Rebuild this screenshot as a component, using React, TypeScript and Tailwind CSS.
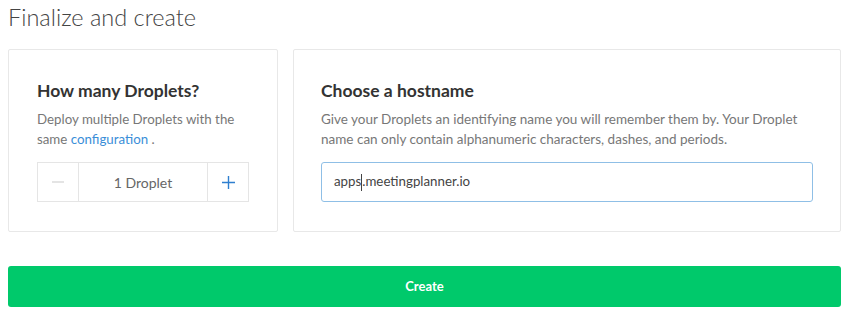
import React from "react";

export default function App() {
  return (
    <div className="w-[850px] h-[312px] bg-white overflow-hidden" style={{ fontFamily: "Lato, 'Open Sans', sans-serif" }}>
      <div className="px-2 pt-[2px]">
        <h1 className="text-[23.5px] leading-[31px] font-light text-[#444]">Finalize and create</h1>
        <div className="mt-[16px] flex gap-[15px]">
          <div className="w-[270px] h-[183px] border border-[#e8e8e8] rounded-[2px] pl-[28px] pr-[20px] pt-[30px]">
            <h2 className="text-[17.5px] leading-[22px] font-bold text-[#333]">How many Droplets?</h2>
            <p className="mt-[7px] text-[13.3px] leading-[20px] text-[#777]">
              Deploy multiple Droplets with the
              <br />
              same <span className="text-[#3a8ed8]">configuration</span> .
            </p>
            <div className="mt-[13px] flex h-[40px] border border-[#e5e5e5] w-[212px]">
              <div className="w-[41px] flex items-center justify-center border-r border-[#e5e5e5]">
                <svg width="12" height="12" viewBox="0 0 12 12"><path d="M0 6h12" stroke="#d2d2d2" strokeWidth="1.2" /></svg>
              </div>
              <div className="flex-1 flex items-center justify-center text-[14px] text-[#666]">1 Droplet</div>
              <div className="w-[41px] flex items-center justify-center border-l border-[#e5e5e5]">
                <svg width="13" height="13" viewBox="0 0 13 13"><path d="M0 6.5h13M6.5 0v13" stroke="#2f7fcf" strokeWidth="1.4" /></svg>
              </div>
            </div>
          </div>
          <div className="flex-1 mr-[1px] h-[183px] border border-[#e8e8e8] rounded-[2px] pl-[27px] pt-[30px]">
            <h2 className="text-[17.5px] leading-[22px] font-bold text-[#333]">Choose a hostname</h2>
            <p className="mt-[7px] text-[13.5px] leading-[20px] text-[#777] whitespace-nowrap">
              Give your Droplets an identifying name you will remember them by. Your Droplet
              <br />
              name can only contain alphanumeric characters, dashes, and periods.
            </p>
            <div className="mt-[13px] w-[492px] h-[40px] border border-[#8fbfe6] rounded-[3px] flex items-center pl-[12px] text-[13.3px] text-[#444]">
              apps<span className="inline-block w-px h-[17px] bg-[#444]" />.meetingplanner.io
            </div>
          </div>
        </div>
        <button className="mt-[34px] w-[833px] h-[41px] rounded-[3px] bg-[#00c96b] text-white text-[13px] font-bold flex items-center justify-center">
          Create
        </button>
      </div>
    </div>
  );
}
